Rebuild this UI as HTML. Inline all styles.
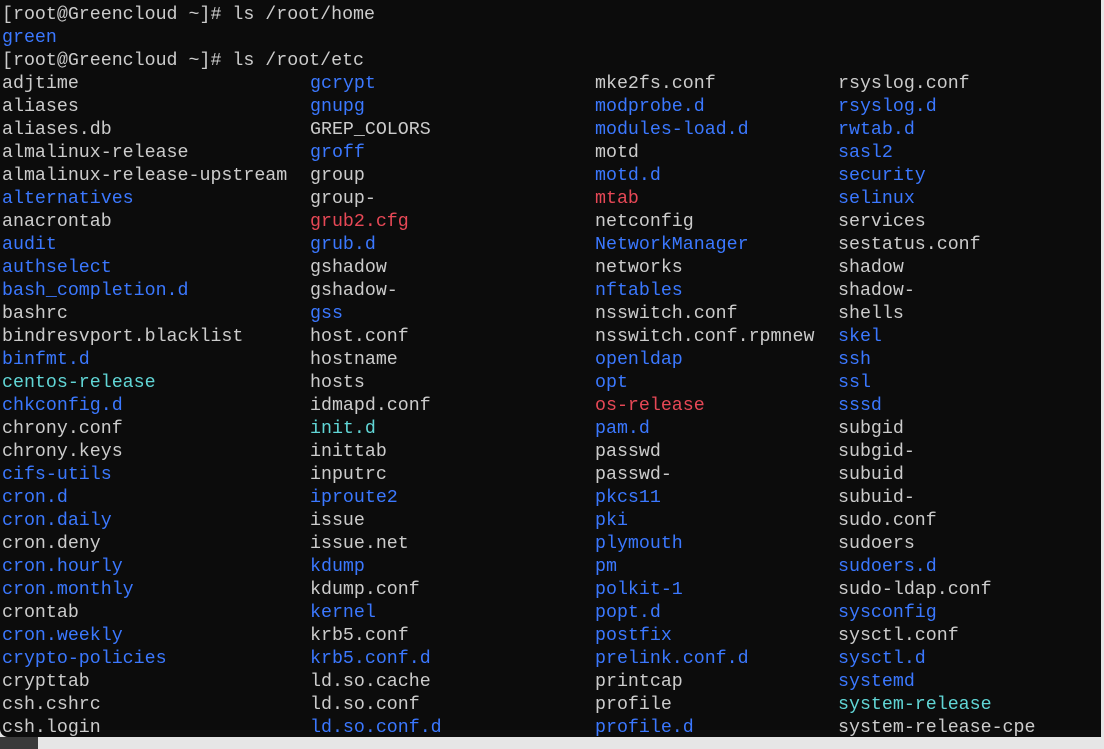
<!DOCTYPE html>
<html><head><meta charset="utf-8"><style>
html,body{margin:0;padding:0;width:1104px;height:749px;overflow:hidden;background:#e6e6e6}
.t{position:absolute;left:0;top:0;width:1101px;height:737px;background:#0c0c0c;border-bottom-left-radius:8px}
.bar{position:absolute;left:0;top:737px;width:38px;height:12px;background:#3a3a3a}
.c{position:absolute;top:4px;font-family:"Liberation Mono",monospace;font-size:18.3px;line-height:23px;color:#cccccc;white-space:pre}
.b{color:#3b78ff}.y{color:#61d6d6}.r{color:#e74856}
</style></head><body>
<div class="t"></div><div class="bar"></div>
<div class="c" style="left:2px">[root@Greencloud ~]# ls /root/home
<span class="b">green</span>
[root@Greencloud ~]# ls /root/etc
adjtime
aliases
aliases.db
almalinux-release
almalinux-release-upstream
<span class="b">alternatives</span>
anacrontab
<span class="b">audit</span>
<span class="b">authselect</span>
<span class="b">bash_completion.d</span>
bashrc
bindresvport.blacklist
<span class="b">binfmt.d</span>
<span class="y">centos-release</span>
<span class="b">chkconfig.d</span>
chrony.conf
chrony.keys
<span class="b">cifs-utils</span>
<span class="b">cron.d</span>
<span class="b">cron.daily</span>
cron.deny
<span class="b">cron.hourly</span>
<span class="b">cron.monthly</span>
crontab
<span class="b">cron.weekly</span>
<span class="b">crypto-policies</span>
crypttab
csh.cshrc
csh.login</div>
<div class="c" style="left:310px;top:73px"><span class="b">gcrypt</span>
<span class="b">gnupg</span>
GREP_COLORS
<span class="b">groff</span>
group
group-
<span class="r">grub2.cfg</span>
<span class="b">grub.d</span>
gshadow
gshadow-
<span class="b">gss</span>
host.conf
hostname
hosts
idmapd.conf
<span class="y">init.d</span>
inittab
inputrc
<span class="b">iproute2</span>
issue
issue.net
<span class="b">kdump</span>
kdump.conf
<span class="b">kernel</span>
krb5.conf
<span class="b">krb5.conf.d</span>
ld.so.cache
ld.so.conf
<span class="b">ld.so.conf.d</span></div>
<div class="c" style="left:595px;top:73px">mke2fs.conf
<span class="b">modprobe.d</span>
<span class="b">modules-load.d</span>
motd
<span class="b">motd.d</span>
<span class="r">mtab</span>
netconfig
<span class="b">NetworkManager</span>
networks
<span class="b">nftables</span>
nsswitch.conf
nsswitch.conf.rpmnew
<span class="b">openldap</span>
<span class="b">opt</span>
<span class="r">os-release</span>
<span class="b">pam.d</span>
passwd
passwd-
<span class="b">pkcs11</span>
<span class="b">pki</span>
<span class="b">plymouth</span>
<span class="b">pm</span>
<span class="b">polkit-1</span>
<span class="b">popt.d</span>
<span class="b">postfix</span>
<span class="b">prelink.conf.d</span>
printcap
profile
<span class="b">profile.d</span></div>
<div class="c" style="left:838px;top:73px">rsyslog.conf
<span class="b">rsyslog.d</span>
<span class="b">rwtab.d</span>
<span class="b">sasl2</span>
<span class="b">security</span>
<span class="b">selinux</span>
services
sestatus.conf
shadow
shadow-
shells
<span class="b">skel</span>
<span class="b">ssh</span>
<span class="b">ssl</span>
<span class="b">sssd</span>
subgid
subgid-
subuid
subuid-
sudo.conf
sudoers
<span class="b">sudoers.d</span>
sudo-ldap.conf
<span class="b">sysconfig</span>
sysctl.conf
<span class="b">sysctl.d</span>
<span class="b">systemd</span>
<span class="y">system-release</span>
system-release-cpe</div>
</body></html>
